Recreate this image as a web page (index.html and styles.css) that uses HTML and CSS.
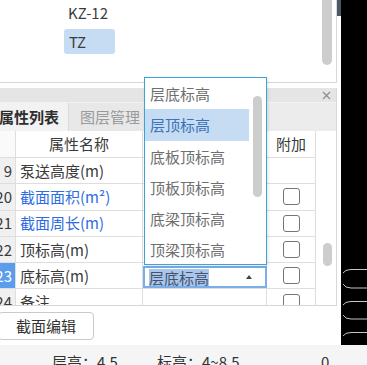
FILE: index.html
```html
<!DOCTYPE html>
<html lang="zh-CN">
<head>
<meta charset="utf-8">
<title>属性列表</title>
<link rel="stylesheet" href="styles.css">
</head>
<body>
<div class="app">
  <div class="main">
    <div class="left">
      <div class="top-row">
        <div class="top-panel">
          <ul class="comp-list">
            <li class="comp-item">KZ-12</li>
            <li class="comp-item is-selected">TZ</li>
          </ul>
          <div class="vscroll vscroll--top"><div class="thumb thumb--top"></div></div>
        </div>
        <div class="strip"><div class="strip-dark"></div></div>
      </div>
      <div class="spacer"></div>
      <div class="prop-panel">
        <div class="title-bar">
          <svg class="close" width="9" height="9" viewBox="0 0 9 9"><path d="M1 1L8 8M8 1L1 8" stroke="#8c8c8c" stroke-width="1.2" fill="none"/></svg>
        </div>
        <div class="tabs">
          <div class="tab is-active"><span class="tab-label">属性列表</span></div>
          <div class="tab">图层管理</div>
        </div>
        <div class="grid-wrap">
          <div class="grid">
            <div class="cell num head"></div>
            <div class="cell name head">属性名称</div>
            <div class="cell val head"></div>
            <div class="cell add head">附加</div>
            <div class="track"><div class="thumb thumb--grid"></div></div>

            <div class="cell num">9</div>
            <div class="cell name">泵送高度(m)</div>
            <div class="cell val"></div>
            <div class="cell add"></div>

            <div class="cell num">20</div>
            <div class="cell name is-blue">截面面积(m²)</div>
            <div class="cell val"></div>
            <div class="cell add"><span class="chk"></span></div>

            <div class="cell num">21</div>
            <div class="cell name is-blue">截面周长(m)</div>
            <div class="cell val"></div>
            <div class="cell add"><span class="chk"></span></div>

            <div class="cell num">22</div>
            <div class="cell name">顶标高(m)</div>
            <div class="cell val"></div>
            <div class="cell add"><span class="chk"></span></div>

            <div class="cell num is-current">23</div>
            <div class="cell name">底标高(m)</div>
            <div class="cell val">
              <div class="combo"><span class="combo-sel">层底标高</span><span class="combo-arrow"></span></div>
            </div>
            <div class="cell add"><span class="chk"></span></div>

            <div class="cell num">24</div>
            <div class="cell name">备注</div>
            <div class="cell val"></div>
            <div class="cell add"><span class="chk"></span></div>
          </div>
        </div>
      </div>
      <div class="btn-area"><button class="btn">截面编辑</button></div>

      <div class="dropdown">
        <ul class="dd-list">
          <li class="dd-item">层底标高</li>
          <li class="dd-item is-selected">层顶标高</li>
          <li class="dd-item">底板顶标高</li>
          <li class="dd-item">顶板顶标高</li>
          <li class="dd-item">底梁顶标高</li>
          <li class="dd-item">顶梁顶标高</li>
        </ul>
        <div class="dd-scroll"><div class="thumb thumb--dd"></div></div>
      </div>
    </div>
    <div class="canvas">
      <svg width="26" height="345" viewBox="0 0 26 345">
        <g stroke="#c4c4c4" stroke-width="1" fill="none">
          <path d="M26 269.5H10Q4 269.5 2 273"/>
          <path d="M2 284Q4 288 10 288H26"/>
          <path d="M26 301.5H10Q4 301.5 2 305"/>
          <path d="M2 315Q4 319 10 319H26"/>
          <path d="M26 332.5H10Q4 332.5 2 336"/>
        </g>
      </svg>
    </div>
  </div>
  <div class="status">
    <span class="st st--floor">层高：4.5</span>
    <span class="st st--elev">标高：4~8.5</span>
    <span class="st">0</span>
  </div>
</div>
</body>
</html>
```

FILE: styles.css
```css
* { box-sizing: border-box; margin: 0; padding: 0; }
html, body { width: 367px; height: 365px; overflow: hidden; background: #fff; }
body {
  font-family: "Noto Sans CJK SC", "Noto Sans", sans-serif;
  font-size: 15px;
  color: #3a3a3a;
  line-height: 1.2;
}
.app { display: grid; grid-template-rows: 345px 20px; width: 367px; height: 365px; }
.main { display: flex; height: 345px; }
.left { position: relative; width: 341px; display: flex; flex-direction: column; }
.canvas { flex: 1; background: #000; }
.canvas svg { display: block; }

.top-row { display: flex; height: 83px; }
.top-panel {
  width: 337px; height: 83px; display: flex;
  border-right: 1px solid #d9d9d9; border-bottom: 1px solid #d6d6d6;
}
.comp-list { flex: 1; list-style: none; padding-left: 64px; display: flex; flex-direction: column; gap: 4px; }
.comp-item { height: 25px; line-height: 25px; width: 51px; padding-left: 4px; border-radius: 3px; color: #3c3c3c; }
.comp-item.is-selected { background: #c5dcf3; padding-left: 5px; }
.vscroll--top { width: 14px; }
.thumb { background: #cdcdcd; }
.thumb--top { width: 10px; height: 65px; border-radius: 0 0 5px 5px; }
.strip { width: 4px; }
.strip-dark { height: 16px; background: #4d5864; }

.spacer { height: 5px; }
.prop-panel { width: 337px; border-right: 1px solid #d9d9d9; }
.title-bar {
  height: 15px; background: #e5e5e5; border-bottom: 1px solid #f2f2f2;
  display: flex; justify-content: flex-end; align-items: center; padding-right: 5px;
}
.close { display: block; }
.tabs { height: 28px; display: flex; background: #ececec; }
.tab { display: flex; align-items: center; color: #9a9a9a; }
.tab.is-active { width: 69px; color: #2e2e2e; font-weight: 700; background: #f2f2f2; border-right: 1px solid #d8d8d8; }
.tab-label { margin-left: -1px; }
.tab:not(.is-active) { width: 90px; padding-left: 11px; background: #e8e8e8; }

.grid-wrap { height: 175px; overflow: hidden; border-bottom: 1px solid #d6d6d6; }
.grid {
  display: grid;
  grid-template-columns: 16px 127px 124px 49px 20px;
  grid-template-rows: 27px repeat(6, 26.3px);
}
.cell { border-right: 1px solid #dedede; border-bottom: 1px solid #dedede; display: flex; align-items: center; white-space: nowrap; }
.num { background: #f0f0f0; justify-content: flex-end; padding-right: 3px; color: #3a3a3a; }
.num.head { background: #fafafa; }
.num.is-current { background: #5b9ded; color: #fff; }
.name { padding-left: 4px; }
.name.head { justify-content: center; padding-left: 0; }
.name.is-blue { color: #2c6de3; }
.add { justify-content: center; }
.track { grid-column: 5; grid-row: 1 / 8; background: #fff; padding-left: 7px; }
.thumb--grid { width: 9px; height: 23px; margin-top: 112px; border-radius: 4.5px; }
.chk { width: 17px; height: 17px; border: 1px solid #757575; border-radius: 3px; background: #fff; display: block; }

.combo {
  align-self: stretch; flex: 1; margin: 3px -1px 0 0;
  border: 2px solid #79aeea; display: flex; align-items: center; padding-left: 4px; padding-right: 13px;
  justify-content: space-between; background: #fff;
}
.combo-sel { background: #a9c6ee; color: #44556b; line-height: 17px; }
.combo-arrow { width: 0; height: 0; border-left: 3px solid transparent; border-right: 3px solid transparent; border-bottom: 4px solid #444; }

.btn-area { height: 39px; padding-top: 6px; }
.btn {
  display: block; width: 96px; height: 28px; margin-left: -2px;
  border: 1px solid #c9c9c9; border-radius: 4px; background: #fff;
  font: inherit; color: #333;
}

.dropdown {
  position: absolute; left: 144px; top: 77px; width: 123px; height: 188px;
  border: 1px solid #3ba3d9; background: #fff; display: flex; overflow: hidden;
  box-shadow: 1px 1px 3px rgba(0, 0, 0, 0.12);
}
.dd-list { list-style: none; width: 104px; }
.dd-item { height: 31.3px; line-height: 31.3px; padding-left: 5px; color: #6f6f6f; white-space: nowrap; }
.dd-item.is-selected { background: #c5dcf3; color: #3b72b8; }
.dd-scroll { flex: 1; padding-left: 4px; }
.thumb--dd { width: 9px; height: 101px; margin-top: 18px; border-radius: 4.5px; }

.status { background: #f5f5f5; display: flex; padding-left: 52px; padding-top: 7px; line-height: 20px; color: #333; white-space: nowrap; }
.st--floor { width: 105px; }
.st--elev { width: 164px; }
```
